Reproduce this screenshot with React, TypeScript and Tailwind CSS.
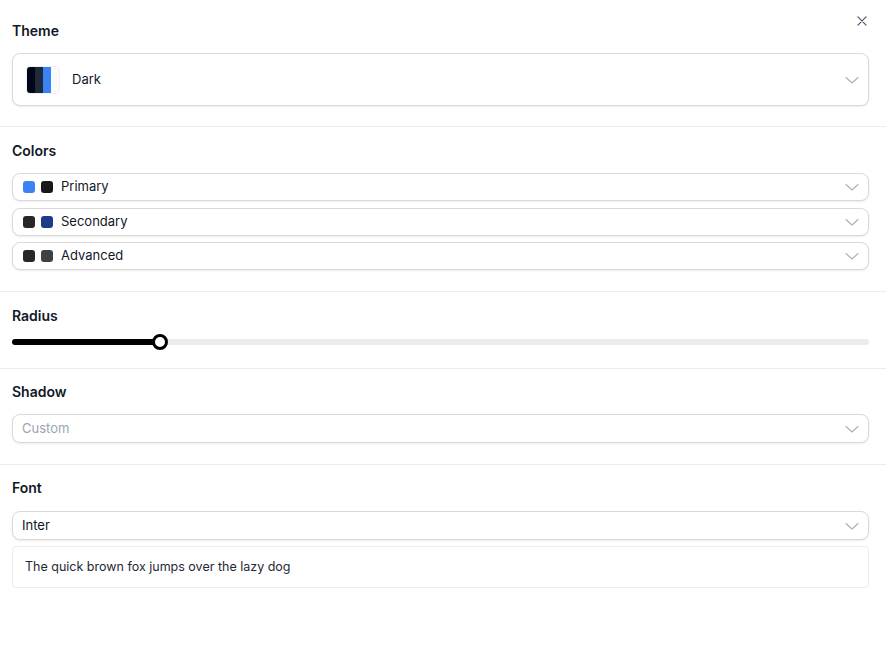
import React from "react";

const Chevron = () => (
  <svg width="24" height="24" viewBox="0 0 24 24" fill="none" stroke="#b0b0b0" strokeWidth="1.1" strokeLinecap="round" strokeLinejoin="round">
    <path d="M6 9.5l6 5.5 6-5.5" />
  </svg>
);

const Swatch = ({ c }: { c: string }) => (
  <span className="inline-block h-3 w-3 rounded-[3px]" style={{ backgroundColor: c }} />
);

const ColorRow = ({ a, b, label }: { a: string; b: string; label: string }) => (
  <div className="flex h-[28px] items-center rounded-[8px] border border-[#d9d9d9] bg-white pl-[10px] pr-[4px] shadow-[0_1px_2px_rgba(0,0,0,0.08)]">
    <div className="flex items-center gap-[6px]">
      <Swatch c={a} />
      <Swatch c={b} />
    </div>
    <span className="ml-2 flex-1 text-[13px] text-[#111827]">{label}</span>
    <Chevron />
  </div>
);

const Heading = ({ children }: { children: React.ReactNode }) => (
  <h2 className="text-[14px] font-semibold leading-5 text-[#111827]">{children}</h2>
);

export default function App() {
  return (
    <div className="relative h-[647px] w-[886px] bg-white" style={{ fontFamily: "Inter, 'Noto Sans', sans-serif" }}>
      <button className="absolute right-[17px] top-[14px] text-[#4b5563]">
        <svg width="14" height="14" viewBox="0 0 24 24" fill="none" stroke="currentColor" strokeWidth="2" strokeLinecap="round">
          <path d="M5 5l14 14M19 5L5 19" />
        </svg>
      </button>

      <section className="border-b border-[#ececec] pb-[20px] pl-3 pr-[17px] pt-[21px]">
        <Heading>Theme</Heading>
        <div className="mt-3 flex h-[53px] items-center rounded-[8px] border border-[#d9d9d9] bg-white pl-[13px] pr-[4px] shadow-[0_1px_2px_rgba(0,0,0,0.08)]">
          <div className="flex h-[28px] w-[34px] overflow-hidden rounded-[4px] border border-[#eef0f3]">
            <span className="h-full flex-1 bg-[#020617]" />
            <span className="h-full flex-1 bg-[#1e293b]" />
            <span className="h-full flex-1 bg-[#3b82f6]" />
            <span className="h-full flex-1 bg-[#f8fafc]" />
          </div>
          <span className="ml-3 flex-1 text-[13px] text-[#111827]">Dark</span>
          <Chevron />
        </div>
      </section>

      <section className="border-b border-[#ececec] pb-[21px] pl-3 pr-[17px] pt-[14px]">
        <Heading>Colors</Heading>
        <div className="mt-3 flex flex-col gap-[6.5px]">
          <ColorRow a="#3b82f6" b="#18181b" label="Primary" />
          <ColorRow a="#27272a" b="#1e3a8a" label="Secondary" />
          <ColorRow a="#27272a" b="#3f3f46" label="Advanced" />
        </div>
      </section>

      <section className="border-b border-[#ececec] pb-[16px] pl-3 pr-[17px] pt-[14px]">
        <Heading>Radius</Heading>
        <div className="relative mt-[6px] flex h-5 items-center">
          <div className="h-[6px] w-full rounded-full bg-[#ececec]" />
          <div className="absolute left-0 top-[7px] h-[6px] w-[150px] rounded-full bg-black" />
          <div className="absolute left-[140px] top-[2px] h-4 w-4 rounded-full border-[3px] border-black bg-white" />
        </div>
      </section>

      <section className="border-b border-[#ececec] pb-[21px] pl-3 pr-[17px] pt-[13px]">
        <Heading>Shadow</Heading>
        <div className="mt-3 flex h-[29px] items-center rounded-[8px] border border-[#d9d9d9] bg-white pl-[9px] pr-[4px] shadow-[0_1px_2px_rgba(0,0,0,0.08)]">
          <span className="flex-1 text-[13px] text-[#9ca3af]">Custom</span>
          <Chevron />
        </div>
      </section>

      <section className="pl-3 pr-[17px] pt-[13px]">
        <Heading>Font</Heading>
        <div className="mt-[13px] flex h-[29px] items-center rounded-[8px] border border-[#d9d9d9] bg-white pl-[9px] pr-[4px] shadow-[0_1px_2px_rgba(0,0,0,0.08)]">
          <span className="flex-1 text-[13px] text-[#111827]">Inter</span>
          <Chevron />
        </div>
        <div className="mt-[6px] flex h-[42px] items-center rounded-[4px] border border-[#ececec] pl-3 text-[12.5px] text-[#1f2937]">
          The quick brown fox jumps over the lazy dog
        </div>
      </section>
    </div>
  );
}
